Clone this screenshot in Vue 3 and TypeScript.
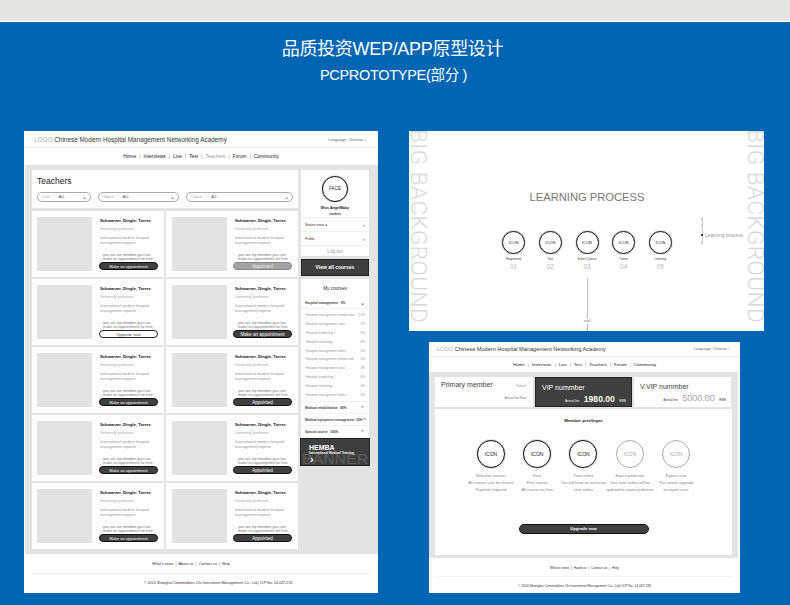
<template>
  <div class="page">
    <div class="topband"></div>
    <header class="hero">
      <h1>品质投资WEP/APP原型设计</h1>
      <h2>PCPROTOTYPE(部分 )</h2>
    </header>
    <main class="boards">
      <section class="board teachers-board">
        <div class="site-head">
          <div class="brand"><span class="logo">LOGO</span> Chinese Modern Hospital Management Networking Academy</div>
          <div class="lang">Language: Chinese ⌄</div>
        </div>
        <nav class="site-nav nav-a">
          <template v-for="(item, i) in navItems" :key="item">
            <span v-if="i" class="sep">|</span>
            <span :class="{ dim: item === 'Teachers' }">{{ item }}</span>
          </template>
        </nav>
        <div class="teachers-body">
          <div class="teachers-main">
            <div class="filter-box">
              <div class="filter-title">Teachers</div>
              <div class="filters">
                <div v-for="f in filters" :key="f.label" class="filter" :class="f.size">
                  <span class="f-label">{{ f.label }}</span>
                  <span class="f-sep">|</span>
                  <span class="f-val">ALL</span>
                  <span class="chev">⌄</span>
                </div>
              </div>
            </div>
            <div class="cards">
              <div v-for="(c, i) in cards" :key="i" class="card">
                <div class="photo"></div>
                <div class="card-text">
                  <div class="t-name">Schwarzer, Dingle, Torres</div>
                  <div class="t-role">University professor</div>
                  <div class="t-desc">International modern hospital<br />management experts</div>
                  <div class="t-note">you are vip member,you can<br />make an appointment for free</div>
                  <div class="t-btn" :class="c.kind">{{ c.text }}</div>
                </div>
              </div>
            </div>
          </div>
          <aside class="side">
            <div class="profile">
              <div class="face">FACE</div>
              <div class="p-name">Miss AngelBaby</div>
              <div class="p-sub">student</div>
              <div class="p-row"><span>Station news ●</span><span class="arrow">›</span></div>
              <div class="p-row"><span>Profile</span><span class="arrow">›</span></div>
              <div class="p-logout">Log out</div>
            </div>
            <div class="view-all">View all courses</div>
            <div class="my-courses">
              <div class="mc-title">My courses</div>
              <div class="mc-row"><span>Hospital management &nbsp; 5%</span><span class="chev">⌄</span></div>
              <div class="mc-list">
                <div v-for="(s, i) in subCourses" :key="i" class="mc-sub">
                  <span>{{ s.name }}</span><span>{{ s.pct }}</span>
                </div>
              </div>
              <div class="mc-row"><span>Medical rehabilitation &nbsp; 80%</span><span class="chev up">⌄</span></div>
              <div class="mc-row"><span>Medical equipment management &nbsp;10%</span><span class="chev up">⌄</span></div>
              <div class="mc-row"><span>Special course &nbsp; 100%</span><span class="chev up">⌄</span></div>
            </div>
            <div class="banner">
              <span class="banner-word">BANNER</span>
              <div class="hemba">HEMBA</div>
              <div class="hemba-sub">International Medical Training</div>
              <div class="hemba-arrow">›</div>
            </div>
          </aside>
        </div>
        <footer class="site-foot foot-a">
          <div class="foot-links">What's news &nbsp;|&nbsp; About us &nbsp;|&nbsp; Contact us &nbsp;|&nbsp; Help</div>
          <div class="foot-copy">© 2016 Shanghai Commodities Chi Investment Management Co., Ltd.| ICP No. 14,037,233</div>
        </footer>
      </section>

      <div class="right-col">
        <section class="board process-board">
          <div class="big-bg">BIG BACKGROUND</div>
          <div class="process-center">
            <div class="process-title">LEARNING PROCESS</div>
            <div class="steps">
              <div v-for="(s, i) in steps" :key="s" class="step">
                <div class="ring small">ICON</div>
                <div class="step-label">{{ s }}</div>
                <div class="step-num">0{{ i + 1 }}</div>
              </div>
            </div>
            <div class="scroll-line">
              <i></i>
              <span>scroll</span>
              <i class="short"></i>
            </div>
          </div>
          <div class="dots">
            <div class="dot-track">
              <b></b><b></b><b class="on"></b><b></b>
            </div>
            <span>Learning process</span>
          </div>
          <div class="big-bg">BIG BACKGROUND</div>
        </section>

        <section class="board member-board">
          <div class="site-head head-b">
            <div class="brand"><span class="logo">LOGO</span> Chinese Modern Hospital Management Networking Academy</div>
            <div class="lang">Language: Chinese ›</div>
          </div>
          <nav class="site-nav nav-b">
            <template v-for="(item, i) in navItems" :key="item">
              <span v-if="i" class="sep">|</span>
              <span>{{ item }}</span>
            </template>
          </nav>
          <div class="member-body">
            <div class="tiers">
              <div class="tier">
                <div class="tier-name first">Primary member</div>
                <div class="tier-def">Default</div>
                <div class="tier-fee">Annual fee:Free</div>
              </div>
              <div class="tier active">
                <div class="tier-name">VIP nummber</div>
                <div class="tier-price"><small>Annual fee</small> <b>1980.00</b> <small>RMB</small></div>
              </div>
              <div class="tier">
                <div class="tier-name vv">V.VIP nummber</div>
                <div class="tier-price"><small>Annual fee</small> <b>5000.00</b> <small>RMB</small></div>
              </div>
            </div>
            <div class="privileges">
              <div class="priv-title">Member privileges</div>
              <div class="priv-row">
                <div v-for="p in privileges" :key="p.lines[0]" class="priv">
                  <div class="ring large" :class="{ faded: p.faded }">ICON</div>
                  <div class="priv-text">
                    <div v-for="l in p.lines" :key="l">{{ l }}</div>
                  </div>
                </div>
              </div>
              <div class="upgrade">Upgrade now</div>
            </div>
          </div>
          <footer class="site-foot foot-b">
            <div class="foot-links">What's news &nbsp;|&nbsp; Hand us &nbsp;|&nbsp; Contact us &nbsp;|&nbsp; Help</div>
            <div class="foot-copy">© 2016 Shanghai Commodities Chi Investment Management Co., Ltd.| ICP No. 14,037,233</div>
          </footer>
        </section>
      </div>
    </main>
  </div>
</template>

<script setup lang="ts">
const navItems = ['Home', 'Interviews', 'Live', 'Test', 'Teachers', 'Forum', 'Community']

const filters = [
  { label: 'Level', size: 'f-s' },
  { label: 'Subject', size: 'f-m' },
  { label: 'Choose', size: 'f-l' }
]

const make = { kind: 'dark', text: 'Make an appointment' }
const cards = [
  make,
  { kind: 'grey', text: 'Appointed' },
  { kind: 'outline', text: 'Opposite sure' },
  make,
  make,
  { kind: 'dark', text: 'Appointed' },
  make,
  { kind: 'dark', text: 'Appointed' },
  make,
  { kind: 'dark', text: 'Appointed' }
]

const subCourses = [
  { name: 'Hospital management introduction', pct: '22%' },
  { name: 'Hospital management rules', pct: '0%' },
  { name: 'Hospital leadership I', pct: '0%' },
  { name: 'Hospital marketing', pct: '0%' },
  { name: 'Hospital management skills I', pct: '0%' },
  { name: 'Hospital management introduction', pct: '0%' },
  { name: 'Hospital management rules', pct: '0%' },
  { name: 'Hospital leadership I', pct: '0%' },
  { name: 'Hospital marketing', pct: '0%' },
  { name: 'Hospital management skills I', pct: '0%' }
]

const steps = ['Registered', 'Test', 'Select Course', 'Tuition', 'Learning']

const privileges = [
  { lines: ['Selective courses', 'All courses can be chosen', 'Payment required'], faded: false },
  { lines: ['Free', 'Free course', 'All course are free'], faded: false },
  { lines: ['Tutor online', 'You will have an exclusive', 'tutor online'], faded: false },
  { lines: ['Expert professor', 'Your tutor online will be', 'updated to expert professor'], faded: true },
  { lines: ['Expert case', 'The course upgrade', 'to expert case'], faded: true }
]
</script>

<style>
html,
body {
  margin: 0;
  background: #0066b3;
}
</style>

<style scoped>
.page {
  width: 790px;
  height: 605px;
  overflow: hidden;
  background: #0066b3;
  font-family: "Liberation Sans", "Noto Sans CJK SC", sans-serif;
  color: #222;
}

.topband {
  height: 21px;
  background: #e6e6e4;
  border-bottom: 1px solid #fff;
}

.hero {
  height: 109px;
  text-align: center;
  color: #fff;
}

.hero h1 {
  margin: 0;
  padding-top: 17px;
  padding-right: 5px;
  font-size: 18px;
  line-height: 20px;
  font-weight: 400;
  letter-spacing: -0.3px;
}

.hero h2 {
  margin: 0;
  padding-top: 8px;
  padding-right: 3px;
  font-size: 14.5px;
  line-height: 16px;
  font-weight: 400;
  letter-spacing: -0.3px;
}

.boards {
  display: flex;
  align-items: flex-start;
  padding-left: 24px;
  gap: 31px;
}

.board {
  background: #fff;
}

.teachers-board {
  width: 354px;
  height: 462px;
  display: flex;
  flex-direction: column;
}

.right-col {
  width: 355px;
  display: flex;
  flex-direction: column;
  gap: 11px;
}

/* shared site chrome */
.site-head {
  height: 17px;
  box-sizing: border-box;
  padding: 0 11px 0 10px;
  display: flex;
  justify-content: space-between;
  align-items: center;
  border-bottom: 1px solid #eee;
}

.brand {
  font-size: 6.4px;
  color: #333;
  white-space: nowrap;
}

.logo {
  color: #aaa;
}

.lang {
  font-size: 4px;
  color: #666;
  white-space: nowrap;
}

.site-nav {
  display: flex;
  justify-content: center;
  align-items: center;
  gap: 3px;
  color: #222;
}

.nav-a {
  height: 16px;
  padding-bottom: 1px;
  font-size: 4.9px;
  background: #fff;
}

.sep {
  color: #888;
}

.dim {
  color: #999;
}

/* teachers page */
.teachers-body {
  flex: none;
  height: 389px;
  margin-left: 1px;
  padding: 5px 9px 0 7px;
  box-sizing: border-box;
  background: #e4e4e4;
  display: flex;
  gap: 3px;
}

.teachers-main {
  width: 266px;
}

.filter-box {
  height: 38px;
  background: #fdfdfd;
  padding: 0 5px;
}

.filter-title {
  padding-top: 6px;
  font-size: 8.5px;
  line-height: 11px;
  color: #222;
}

.filters {
  display: flex;
  gap: 7px;
  margin-top: 5px;
}

.filter {
  height: 10px;
  box-sizing: border-box;
  border: 1px solid #aaa;
  border-radius: 5px;
  display: flex;
  align-items: center;
  gap: 3px;
  padding: 0 3px 0 4px;
  font-size: 3.3px;
  color: #aaa;
}

.f-s {
  width: 54px;
}

.f-m {
  width: 81px;
}

.f-l {
  width: 107px;
}

.f-val {
  color: #444;
  flex: 1;
  margin-left: 2px;
}

.filter .chev {
  color: #555;
}

.chev {
  font-size: 6px;
  line-height: 6px;
  color: #777;
}

.chev.up {
  display: inline-block;
  transform: rotate(180deg);
}

.cards {
  margin-top: 3px;
  display: grid;
  grid-template-columns: 132px 132px;
  grid-auto-rows: 66px;
  gap: 2px;
}

.card {
  background: #fdfdfd;
  display: flex;
  padding: 6px 5px;
  box-sizing: border-box;
  gap: 8px;
}

.card:nth-child(even) {
  padding-left: 6px;
}

.photo {
  width: 55px;
  height: 54px;
  flex: none;
  background: #e3e3e3;
}

.card-text {
  flex: 1;
  min-width: 0;
  display: flex;
  flex-direction: column;
  white-space: nowrap;
}

.t-name {
  margin-top: 1px;
  font-size: 4.2px;
  line-height: 5px;
  font-weight: 700;
  color: #111;
}

.t-role {
  margin-top: 4px;
  font-size: 3.8px;
  line-height: 5px;
  color: #aaa;
}

.t-desc {
  margin-top: 4px;
  font-size: 3.8px;
  line-height: 4.5px;
  color: #999;
}

.t-note {
  margin-top: 8px;
  padding-left: 3px;
  font-size: 3.8px;
  line-height: 4.2px;
  color: #777;
}

.t-btn {
  margin-top: 0.6px;
  margin-left: -1px;
  width: 59px;
  height: 8px;
  flex: none;
  box-sizing: border-box;
  border-radius: 4px;
  text-align: center;
  font-size: 4px;
  line-height: 7px;
}

.card:nth-child(even) .t-btn {
  margin-left: -2px;
  font-size: 4.6px;
}

.t-btn.dark {
  background: #404040;
  border: 1px solid #111;
  color: #fff;
}

.t-btn.grey {
  background: #a3a3a3;
  border: 1px solid #888;
  color: #eee;
}

.t-btn.outline {
  background: #fff;
  border: 1px solid #222;
  color: #444;
}

/* sidebar */
.side {
  width: 68px;
  display: flex;
  flex-direction: column;
}

.profile {
  height: 86px;
  background: #fdfdfd;
  text-align: center;
}

.face {
  width: 26px;
  height: 26px;
  box-sizing: border-box;
  margin: 6px auto 0;
  border: 1px solid #111;
  box-shadow: 0 0 1px #111;
  border-radius: 50%;
  font-size: 4.6px;
  line-height: 24px;
  color: #333;
}

.p-name {
  margin-top: 3px;
  font-size: 3.7px;
  line-height: 6px;
  font-weight: 700;
}

.p-sub {
  font-size: 3.2px;
  line-height: 6px;
  font-weight: 700;
  color: #444;
}

.p-row {
  height: 14px;
  padding: 0 4px;
  border-top: 1px solid #f0f0f0;
  box-sizing: border-box;
  display: flex;
  justify-content: space-between;
  align-items: center;
  font-size: 3.4px;
  color: #333;
}

.arrow {
  font-size: 6px;
  color: #777;
}

.p-logout {
  height: 13px;
  border-top: 1px solid #f0f0f0;
  box-sizing: border-box;
  line-height: 12px;
  font-size: 4.6px;
  color: #999;
}

.view-all {
  margin-top: 3px;
  height: 17px;
  box-sizing: border-box;
  background: #3f3f3f;
  border: 1px solid #222;
  color: #fff;
  font-size: 5px;
  font-weight: 700;
  line-height: 15px;
  text-align: center;
}

.my-courses {
  margin-top: 3px;
  height: 158px;
  background: #fdfdfd;
}

.mc-title {
  height: 18px;
  line-height: 19px;
  text-align: center;
  font-size: 4.6px;
  color: #333;
}

.mc-row {
  height: 12px;
  display: flex;
  justify-content: space-between;
  align-items: center;
  padding: 0 4px;
  border-bottom: 1px solid #f2f2f2;
  box-sizing: border-box;
  font-size: 3.2px;
  font-weight: 700;
  color: #444;
  white-space: nowrap;
}

.mc-list {
  padding: 2px 0 2px;
  height: 93px;
  box-sizing: border-box;
  border-bottom: 1px solid #f2f2f2;
}

.mc-sub {
  height: 8.8px;
  padding: 0 4px 0 5px;
  display: flex;
  justify-content: space-between;
  align-items: center;
  font-size: 3.2px;
  color: #999;
  white-space: nowrap;
}

.banner {
  position: relative;
  margin: 1px -1px 0;
  height: 28px;
  box-sizing: border-box;
  background: #3f3f3f;
  border: 1px solid #222;
  color: #fff;
  overflow: hidden;
}

.banner-word {
  position: absolute;
  left: 1px;
  top: 12px;
  font-size: 15.5px;
  line-height: 16px;
  letter-spacing: 0.3px;
  color: #5c5c5c;
}

.hemba {
  position: relative;
  margin: 5px 0 0 8px;
  font-size: 7px;
  line-height: 7px;
  font-weight: 700;
}

.hemba-sub {
  position: relative;
  margin-left: 8px;
  font-size: 3.2px;
  line-height: 4px;
  font-weight: 700;
}

.hemba-arrow {
  position: relative;
  margin-left: 9px;
  font-size: 11px;
  line-height: 9px;
  font-weight: 700;
}

/* footers */
.site-foot {
  text-align: center;
  white-space: nowrap;
}

.foot-links {
  font-size: 3.8px;
  color: #333;
}

.foot-copy {
  font-size: 3.7px;
  color: #333;
}

.foot-a {
  flex: 1;
}

.foot-a .foot-links {
  height: 19px;
  margin: 0 8px;
  line-height: 20px;
  padding-right: 20px;
  border-bottom: 1px solid #f0f0f0;
}

.foot-a .foot-copy {
  margin-top: 5px;
  line-height: 8px;
  padding-left: 34px;
}

/* learning process */
.process-board {
  position: relative;
  height: 200px;
  display: flex;
  overflow: hidden;
}

.big-bg {
  width: 20px;
  flex: none;
  margin-top: -2px;
  writing-mode: vertical-rl;
  font-family: Roboto, "Liberation Sans", sans-serif;
  font-size: 22.5px;
  line-height: 20px;
  font-weight: 300;
  color: #d8d8d8;
  white-space: nowrap;
  letter-spacing: 0.5px;
}

.process-center {
  width: 318px;
  flex: none;
  text-align: center;
  margin-left: -1px;
}

.process-title {
  margin-top: 59px;
  font-size: 11.2px;
  line-height: 14px;
  color: #777;
}

.steps {
  margin-top: 27px;
  display: flex;
  justify-content: center;
  gap: 14.2px;
}

.step {
  width: 22.5px;
  display: flex;
  flex-direction: column;
  align-items: center;
}

.ring {
  flex: none;
  box-sizing: border-box;
  border-radius: 50%;
  border: 1px solid #111;
  box-shadow: 0 0 1px #111;
  text-align: center;
  color: #222;
}

.ring.small {
  width: 23px;
  height: 23px;
  line-height: 21px;
  font-size: 4px;
}

.ring.large {
  width: 28px;
  height: 28px;
  line-height: 26px;
  font-size: 5px;
}

.ring.faded {
  border-color: #aaa;
  box-shadow: none;
  color: #aaa;
}

.step-label {
  margin-top: 3px;
  font-size: 3px;
  line-height: 4px;
  white-space: nowrap;
  color: #333;
}

.step-num {
  margin-top: 1.5px;
  font-size: 6.5px;
  line-height: 7px;
  color: #bbb;
}

.scroll-line {
  margin-top: 8.5px;
  display: flex;
  flex-direction: column;
  align-items: center;
}

.scroll-line i {
  display: block;
  width: 1px;
  height: 41px;
  flex: none;
  background: #bbb;
}

.scroll-line i.short {
  height: 9px;
}

.scroll-line span {
  font-size: 2.8px;
  line-height: 4px;
  color: #555;
}

.dots {
  position: absolute;
  left: 292px;
  top: 87px;
  display: flex;
  align-items: flex-start;
  gap: 2px;
  font-size: 5px;
  color: #999;
  white-space: nowrap;
}

.dot-track {
  position: relative;
  width: 2px;
  height: 26px;
  background: linear-gradient(#ccc, #ccc) center / 1px 100% no-repeat;
}

.dot-track b {
  position: absolute;
  left: 0;
  top: 0;
  width: 2px;
  height: 2px;
  border-radius: 50%;
  background: #bbb;
}

.dot-track b:nth-child(2) {
  top: 6px;
}

.dot-track b:nth-child(3) {
  top: 16px;
}

.dot-track b:nth-child(4) {
  top: 24px;
}

.dot-track b.on {
  background: #000;
}

.dots span {
  margin-top: 14px;
  line-height: 6px;
}

/* member page */
.member-board {
  width: 311px;
  height: 251px;
  margin-left: 20px;
  display: flex;
  flex-direction: column;
}

.head-b {
  height: 15px;
  padding: 0 11px 0 8px;
}

.head-b .brand {
  font-size: 5.6px;
}

.head-b .lang {
  font-size: 3.8px;
}

.nav-b {
  height: 15px;
  font-size: 4.4px;
  background: #fff;
}

.member-body {
  height: 186px;
  margin-right: 2px;
  padding: 5px 6px 0;
  box-sizing: border-box;
  background: #e4e4e4;
}

.tiers {
  display: grid;
  grid-template-columns: 98px 97px 97px;
  gap: 2px;
  height: 30px;
}

.tier {
  position: relative;
  background: #fdfdfd;
  padding: 4px 5px 0 6px;
  box-sizing: border-box;
  color: #444;
}

.tier.active {
  background: #404040;
  color: #fff;
  border: 1px solid #222;
  padding-top: 5px;
}

.tier-name {
  font-size: 7px;
  line-height: 9px;
  white-space: nowrap;
}

.tier-name.first {
  margin-top: -1px;
}

.tier-name.vv {
  margin-top: 1px;
}

.tier-def {
  text-align: right;
  margin-top: -5px;
  padding-right: 2px;
  font-size: 3px;
  line-height: 4px;
  color: #999;
}

.tier-fee {
  text-align: right;
  margin-top: 8px;
  padding-right: 2px;
  font-size: 3px;
  line-height: 4px;
  color: #777;
}

.tier-price {
  text-align: right;
  margin-top: 0;
  line-height: 9px;
  white-space: nowrap;
}

.tier-price small {
  font-size: 3px;
}

.tier-price b {
  font-size: 9px;
  font-weight: 400;
  color: #fff;
}

.tier.active .tier-price b {
  font-weight: 700;
  font-size: 8.6px;
}

.tier:not(.active) .tier-price b {
  color: #aaa;
}

.privileges {
  margin-top: 2px;
  height: 146px;
  background: #fdfdfd;
  overflow: hidden;
  text-align: center;
}

.priv-title {
  margin-top: 9px;
  font-size: 4.4px;
  line-height: 5px;
  font-weight: 700;
  color: #222;
}

.priv-row {
  margin-top: 17px;
  display: flex;
  justify-content: center;
}

.priv {
  width: 46.3px;
  display: flex;
  flex-direction: column;
  align-items: center;
}

.priv-text {
  margin-top: 4px;
  font-size: 3.9px;
  line-height: 7px;
  color: #888;
  white-space: nowrap;
}

.upgrade {
  width: 130px;
  height: 10px;
  box-sizing: border-box;
  margin: 31px auto 0;
  background: #404040;
  border: 1px solid #111;
  border-radius: 5px;
  color: #fff;
  font-size: 4.2px;
  font-weight: 700;
  line-height: 8px;
}

.foot-b {
  padding-top: 6px;
}

.foot-b .foot-links {
  height: 12px;
  margin: 0 8px;
  line-height: 8px;
  font-size: 3.4px;
  border-bottom: 1px solid #f0f0f0;
}

.foot-b .foot-copy {
  margin-top: 5px;
  line-height: 8px;
  font-size: 3.3px;
}
</style>
